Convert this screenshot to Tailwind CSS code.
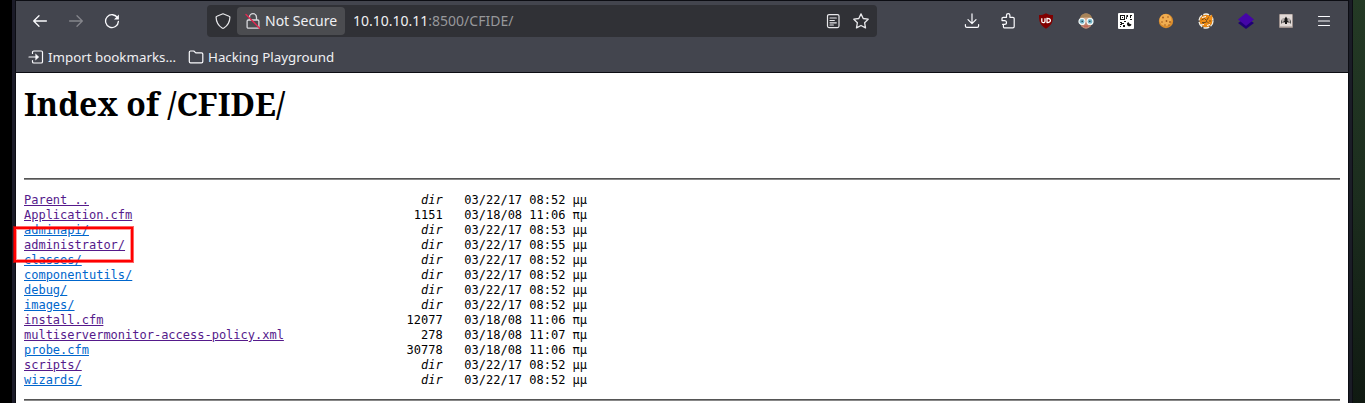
<!DOCTYPE html>
<html lang="en">
<head>
<meta charset="utf-8">
<title>Index of /CFIDE/</title>
<script src="https://cdn.jsdelivr.net/npm/@tailwindcss/browser@4"></script>
</head>
<body class="h-[403px] w-[1365px] overflow-hidden bg-black">
<div class="relative flex h-[403px]">
  <div class="w-[12px] shrink-0 bg-black"></div>
  <div class="w-[4px] shrink-0 border-r border-[#0c0d13] bg-[#1b1b28]"></div>
  <main class="flex w-[1332px] shrink-0 flex-col bg-white">
    <header class="h-[73px] shrink-0 border-y border-[#0c0d13] bg-[#43454e] font-['Noto_Sans','Open_Sans',sans-serif] text-[13.33px] text-[#f0f0f3]">
      <nav class="flex h-[40px] items-center pr-[16px] pl-[16px]">
        <svg class="size-4" viewBox="0 0 16 16" fill="none" stroke="#fbfbfe" stroke-width="1.3" stroke-linecap="round" stroke-linejoin="round"><path d="M14.4 8H1.8M7 2.7L1.7 8 7 13.3"/></svg>
        <svg class="ml-5 size-4" viewBox="0 0 16 16" fill="none" stroke="#85868c" stroke-width="1.3" stroke-linecap="round" stroke-linejoin="round"><path d="M1.6 8h12.6M9 2.7L14.3 8 9 13.3"/></svg>
        <svg class="ml-5 size-4" viewBox="0 0 16 16" fill="none" stroke="#fbfbfe" stroke-width="1.3" stroke-linecap="round"><path d="M13.6 5A6.4 6.4 0 1 0 14.4 8.4"/><path d="M14.9 1.5v4.9h-4.9z" fill="#fbfbfe" stroke="none"/></svg>
        <div class="ml-[87px] flex h-8 w-[670px] items-center rounded bg-[#303136]">
          <svg class="ml-2 size-4" viewBox="0 0 16 16" fill="none" stroke="#e8e8eb" stroke-width="1.2" stroke-linejoin="round"><path d="M8 .8l6.1 2.4c.6.2.8.6.8 1.1-.1 4.8-2.3 8.4-6 10.7-.6.4-1.2.4-1.8 0C3.4 12.7 1.2 9.1 1.1 4.3c0-.5.2-.9.8-1.1z"/></svg>
          <div class="ml-1.5 flex h-7 w-[108px] items-center rounded bg-[#4b4c50] pl-2">
            <svg class="size-4" viewBox="0 0 16 16" fill="none" stroke="#d8d8dc" stroke-width="1.3" stroke-linecap="round"><path d="M4.5 7V4.2a3.5 3.5 0 0 1 7 0V7h1.2c.7 0 1.2.5 1.2 1.2v5.8c0 .7-.5 1.2-1.2 1.2H3.3c-.7 0-1.2-.5-1.2-1.2V8.200C2.100 7.500 2.600 7 3.300 7H11"/><path d="M1 1.600l13.600 13.600" stroke="#e22850" stroke-width="1.4"/></svg>
            <span class="ml-1 text-[14px] leading-5 whitespace-nowrap">Not Secure</span>
          </div>
          <span class="ml-2 text-[14px] leading-5 whitespace-nowrap">10.10.10.11<span class="text-[#97989b]">:8500/CFIDE/</span></span>
          <svg class="ml-auto size-4" viewBox="0 0 16 16" fill="none" stroke="#e8e8eb" stroke-width="1.2" stroke-linecap="round"><rect x="2.5" y="1.6" width="11.5" height="13" rx="1.5"/><path d="M5 5h6.300M5 7.500h4.300M5 9.800h6.300M5 12h3.300"/></svg>
          <svg class="mr-2 ml-3 size-4" viewBox="0 0 16 16" fill="none" stroke="#e8e8eb" stroke-width="1.3" stroke-linejoin="round"><path d="M8 .9l2.200 4.600 5 .7-3.600 3.500.9 5.200L8 12.500l-4.500 2.400.9-5.200L.8 6.200l5-.7z"/></svg>
        </div>
        <div class="ml-auto flex items-center gap-6">
          <svg class="size-4" viewBox="0 0 16 16" fill="none" stroke="#fbfbfe" stroke-width="1.2" stroke-linecap="round" stroke-linejoin="round"><path d="M8 .9v9.500M4 6.600l4 4 4-4M1.400 11.500V13c0 .8.600 1.400 1.400 1.400h10.400c.8 0 1.400-.6 1.400-1.400v-1.500"/></svg>
          <svg class="-mr-[2px] -ml-[4px] h-4 w-4" viewBox="0 0 16 16" fill="none" stroke="#fbfbfe" stroke-width="1.2" stroke-linecap="round" stroke-linejoin="round"><path d="M2 7.600V5.600c0-.8.500-1.300 1.300-1.300h3.200V2.300a1.700 1.700 0 0 1 3.400 0v2h3c.8 0 1.300.5 1.300 1.300v8c0 .8-.5 1.300-1.300 1.300H4.700c-.8 0-1.300-.5-1.300-1.300v-2.200M2 7.600h2.600a1.900 1.900 0 0 1 0 3.800H2.600"/></svg>
          <svg class="size-4" viewBox="0 0 16 16"><path d="M8 .3c2 1.300 4.300 1.800 7 1.800 0 6.500-.8 10-7 13.600C1.800 12.100 1 8.600 1 2.100 3.700 2.100 6 1.600 8 .3z" fill="#800000"/><path d="M3.800 5.200v3c0 2 3.200 2 3.200 0v-3M9 5.300v4.200c4.500.4 4.500-4.500 0-4.200z" fill="none" stroke="#fff" stroke-width="1.300"/></svg>
          <svg class="size-4" viewBox="0 0 16 16"><ellipse cx="8" cy="8" rx="6.400" ry="7.600" fill="#d9ab8c"/><path d="M1.800 6.500C2 2 5 .4 8 .4s6 1.600 6.200 6.100L11 4.500H6z" fill="#a88458"/><path d="M2 8.500h12c0 3-2 6.800-6 7-4-.2-6-4-6-7z" fill="#bd8570"/><circle cx="4" cy="8.400" r="3" fill="#75b5c8" stroke="#f3f8f8" stroke-width="1.200"/><circle cx="12" cy="8.400" r="3" fill="#75b5c8" stroke="#f3f8f8" stroke-width="1.200"/><path d="M3.500 8.400h1.500M11 8.400h1.500" stroke="#284652" stroke-width="1.300"/><path d="M6 13.200h4" stroke="#c8564c"/></svg>
          <svg class="size-4" viewBox="0 0 16 16"><rect width="16" height="16" rx="1" fill="#fff"/><g fill="#151515"><path d="M2 2h5v5H2zm1 1v3h3V3z" fill-rule="evenodd"/><path d="M4 4h1v1H4zM8.500 2h1.500v2H9v2H8zM12 2h2v1h-1v2h-1zM12 6h2v1h-2zM2 9h2v1h2v1H4v1H2v-1h1v-1H2zM6 8h2v1H6zM5 12h2v2H5zM2 13h1v1H2zM10.500 9c.5 1.500 1.500 2 3 2.500-.5 2.500-4.500 2.500-4.500-.5 0-1 .5-1.500 1.500-2z"/></g></svg>
          <svg class="size-4" viewBox="0 0 16 16"><circle cx="8" cy="8" r="7.200" fill="#d98c2c"/><circle cx="7.500" cy="7" r="6" fill="#f0ad51"/><g fill="#a0581a"><circle cx="5" cy="4.500" r=".9"/><circle cx="10" cy="4" r=".8"/><circle cx="4" cy="9" r=".8"/><circle cx="8.500" cy="8" r=".9"/><circle cx="12" cy="9" r=".9"/><circle cx="7" cy="12" r=".8"/><circle cx="11" cy="12" r=".7"/></g></svg>
          <svg class="size-4" viewBox="0 0 16 16"><circle cx="8" cy="8" r="6.500" fill="#e88612"/><circle cx="8" cy="8" r="7" fill="none" stroke="#f4f0e4" stroke-width="1.300" stroke-dasharray="6 1.500"/><path d="M3 7l3-2.500 4 .5 4-3.500.5 4-2 5-5 1.500-4-1z" fill="#f28f16"/><path d="M3.500 7l3-1.500 2 2 2-3M4 9.500h3l2-1 2 2M4 11.500l2-1M11 8h2" fill="none" stroke="#62421c" stroke-width=".9"/><path d="M4 4.500l4-1M3 12l3-.5M9 12.500l3-1" stroke="#fff" stroke-width="1"/></svg>
          <svg class="size-4" viewBox="0 0 16 16"><path d="M0 10l3-2h10l3 2-8 6z" fill="#200075"/><path d="M8 0l8 6.500L8 13 0 6.500z" fill="#4505a8"/></svg>
          <svg class="size-4" viewBox="0 0 16 16"><rect x="1" y="1" width="14" height="14" rx="1" fill="#9c908d"/><rect x="2" y="1.500" width="12" height="12" fill="#e1d9d6"/><path d="M3 7l2-2h6l2 2v3H3z" fill="#b0a9a7"/><path d="M8 3.500l1.500 2.500v2L12 9.500 9 9v2H7V9l-3 .5L6.500 8V6z" fill="#171717"/><path d="M3.500 10.500v-3M12.500 10.500v-3" stroke="#555"/></svg>
          <svg class="-ml-0.5 size-4" viewBox="0 0 16 16" stroke="#fbfbfe" stroke-width="1.2" stroke-linecap="round"><path d="M2.500 3.500h11M2.500 8h11M2.500 12.500h11"/></svg>
        </div>
      </nav>
      <div class="flex h-[31px] items-center pt-0.5 pl-[12px]">
        <svg class="-mt-px size-4" viewBox="0 0 16 16" fill="none" stroke="#fbfbfe" stroke-width="1.2" stroke-linecap="round" stroke-linejoin="round"><path d="M4.500 4.500V3.300c0-.8.500-1.300 1.300-1.300h7.400c.8 0 1.300.5 1.300 1.300v9.400c0 .8-.5 1.300-1.300 1.300H5.800c-.8 0-1.300-.5-1.300-1.300v-1.200M1 8h8"/><path d="M7.800 5.200L10.800 8l-3 2.800z" fill="#fbfbfe" stroke-width=".5"/></svg>
        <span class="ml-1 w-[128px] whitespace-nowrap">Import bookmarks…</span>
        <svg class="-mt-px ml-[12px] size-4" viewBox="0 0 16 16" fill="none" stroke="#fbfbfe" stroke-width="1.2" stroke-linejoin="round"><path d="M1.300 12.600V3.200c0-.7.500-1.200 1.200-1.200h3.300l2 1.900h5.700c.8 0 1.300.5 1.300 1.200v7.500c0 .8-.5 1.300-1.300 1.300h-11c-.7 0-1.200-.5-1.200-1.300z"/></svg>
        <span class="ml-1 whitespace-nowrap">Hacking Playground</span>
      </div>
    </header>
    <section class="px-2">
      <h1 class="mt-[9px] h-[44px] w-max font-['Noto_Serif','Droid_Serif','Liberation_Serif',serif] text-[32px] leading-[44px] font-bold whitespace-nowrap text-black">Index of /CFIDE/</h1>
      <hr class="mt-[52px] h-[2px] border-t border-b border-t-[#555] border-b-[#888]">
<pre class="mt-[13px] h-[195px] font-['DejaVu_Sans_Mono',monospace] text-[12px] leading-[15px] tracking-[-0.006px] text-black [&_a]:text-[#0066cc] [&_a]:underline [&_a.v]:text-[#551a8b]"><a class="v">Parent ..</a>                                              <i>dir</i>   03/22/17 08:52 μμ
<a class="v">Application.cfm</a>                                       1151   03/18/08 11:06 πμ
<a>adminapi/</a>                                              <i>dir</i>   03/22/17 08:53 μμ
<a class="v">administrator/</a>                                         <i>dir</i>   03/22/17 08:55 μμ
<a>classes/</a>                                               <i>dir</i>   03/22/17 08:52 μμ
<a>componentutils/</a>                                        <i>dir</i>   03/22/17 08:52 μμ
<a>debug/</a>                                                 <i>dir</i>   03/22/17 08:52 μμ
<a>images/</a>                                                <i>dir</i>   03/22/17 08:52 μμ
<a class="v">install.cfm</a>                                          12077   03/18/08 11:06 πμ
<a class="v">multiservermonitor-access-policy.xml</a>                   278   03/18/08 11:07 πμ
<a>probe.cfm</a>                                            30778   03/18/08 11:06 πμ
<a class="v">scripts/</a>                                               <i>dir</i>   03/22/17 08:52 μμ
<a>wizards/</a>                                               <i>dir</i>   03/22/17 08:52 μμ</pre>
      <hr class="mt-[11px] h-[2px] border-t border-b border-t-[#555] border-b-[#888]">
    </section>
  </main>
  <div class="w-[5px] shrink-0 border-x border-[#0c0d13] bg-[#1a1c26]"></div>
  <div class="flex-1 bg-linear-to-b from-[#243a25] via-[#1c2d1e] via-50% to-[#101a12]"></div>
  <div class="absolute top-[227px] left-[14px] h-[35px] w-[119px] border-2 border-[#ff0000] shadow-[0_0_0_1px_rgba(255,0,0,0.6),inset_0_0_0_1px_rgba(255,0,0,0.4)]"></div>
</div>
</body>
</html>
